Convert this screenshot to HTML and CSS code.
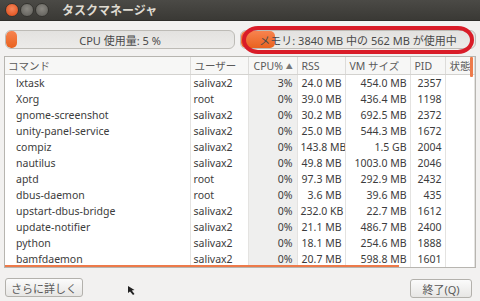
FILE: index.html
```html
<!DOCTYPE html>
<html lang="ja">
<head>
    <meta charset="UTF-8">
    <title>タスクマネージャ</title>
    <link rel="stylesheet" href="styles.css">
</head>
<body>
    <div class="window">
        <div class="titlebar">
            <span class="wbtn close"></span>
            <span class="wbtn min"></span>
            <span class="wbtn max"></span>
            <span class="title">タスクマネージャ</span>
        </div>

        <div class="meters">
            <div class="meter cpu">
                <div class="fill" style="width: 5%"></div>
                <span class="label">CPU 使用量: 5 %</span>
            </div>
            <div class="meter mem">
                <div class="fill" style="width: 14.6%"></div>
                <span class="label">メモリ: 3840 MB 中の 562 MB が使用中</span>
            </div>
            <div class="mark"></div>
        </div>

        <div class="list">
            <table>
                <colgroup>
                    <col class="c-cmd">
                    <col class="c-user">
                    <col class="c-cpu">
                    <col class="c-rss">
                    <col class="c-vm">
                    <col class="c-pid">
                    <col>
                </colgroup>
                <thead>
                    <tr>
                        <th class="cmd">コマンド</th>
                        <th>ユーザー</th>
                        <th class="sorted">CPU% <span class="arrow">▲</span></th>
                        <th>RSS</th>
                        <th>VM サイズ</th>
                        <th>PID</th>
                        <th>状態</th>
                    </tr>
                </thead>
                <tbody>
                    <tr><td class="cmd">lxtask</td><td>salivax2</td><td class="num cpu">3%</td><td class="num">24.0 MB</td><td class="num">454.0 MB</td><td class="num">2357</td><td></td></tr>
                    <tr><td class="cmd">Xorg</td><td>root</td><td class="num cpu">0%</td><td class="num">39.0 MB</td><td class="num">436.4 MB</td><td class="num">1198</td><td></td></tr>
                    <tr><td class="cmd">gnome-screenshot</td><td>salivax2</td><td class="num cpu">0%</td><td class="num">30.2 MB</td><td class="num">692.5 MB</td><td class="num">2372</td><td></td></tr>
                    <tr><td class="cmd">unity-panel-service</td><td>salivax2</td><td class="num cpu">0%</td><td class="num">25.0 MB</td><td class="num">544.3 MB</td><td class="num">1672</td><td></td></tr>
                    <tr><td class="cmd">compiz</td><td>salivax2</td><td class="num cpu">0%</td><td class="num">143.8 MB</td><td class="num">1.5 GB</td><td class="num">2004</td><td></td></tr>
                    <tr><td class="cmd">nautilus</td><td>salivax2</td><td class="num cpu">0%</td><td class="num">49.8 MB</td><td class="num">1003.0 MB</td><td class="num">2046</td><td></td></tr>
                    <tr><td class="cmd">aptd</td><td>root</td><td class="num cpu">0%</td><td class="num">97.3 MB</td><td class="num">292.9 MB</td><td class="num">2432</td><td></td></tr>
                    <tr><td class="cmd">dbus-daemon</td><td>root</td><td class="num cpu">0%</td><td class="num">3.6 MB</td><td class="num">39.6 MB</td><td class="num">435</td><td></td></tr>
                    <tr><td class="cmd">upstart-dbus-bridge</td><td>salivax2</td><td class="num cpu">0%</td><td class="num">232.0 KB</td><td class="num">22.7 MB</td><td class="num">1612</td><td></td></tr>
                    <tr><td class="cmd">update-notifier</td><td>salivax2</td><td class="num cpu">0%</td><td class="num">21.1 MB</td><td class="num">486.7 MB</td><td class="num">2400</td><td></td></tr>
                    <tr><td class="cmd">python</td><td>salivax2</td><td class="num cpu">0%</td><td class="num">18.1 MB</td><td class="num">254.6 MB</td><td class="num">1888</td><td></td></tr>
                    <tr><td class="cmd">bamfdaemon</td><td>salivax2</td><td class="num cpu">0%</td><td class="num">20.7 MB</td><td class="num">598.8 MB</td><td class="num">1601</td><td></td></tr>
                </tbody>
            </table>
            <div class="vscroll"></div>
            <div class="hscroll"></div>
        </div>

        <div class="footer">
            <button>さらに詳しく</button>
            <svg class="pointer" width="10" height="12" viewBox="0 0 10 12">
                <path d="M1 1 L1 8 L3 6.5 L6 10 L7.5 9 L4.8 5.6 L7.5 5 Z" fill="#222"/>
            </svg>
            <button class="quit">終了(Q)</button>
        </div>
    </div>
</body>
</html>
```

FILE: styles.css
```css
body {
    margin: 0;
    font-family: "Noto Sans", "Noto Sans CJK JP", sans-serif;
    font-size: 10.5px;
    color: #3c3c3c;
}
.window {
    width: 480px;
    height: 301px;
    background-color: #f2f1f0;
    overflow: hidden;
}
.titlebar {
    height: 20px;
    display: flex;
    align-items: center;
    padding-left: 5px;
    background: linear-gradient(#4b4a46, #3a3935);
    border-bottom: 1px solid #2e2d2a;
}
.wbtn {
    width: 12px;
    height: 12px;
    border-radius: 50%;
    margin-right: 1px;
    background: radial-gradient(circle at 50% 40%, #8a8882, #5c5b56);
    border: 1px solid #34332f;
}
.wbtn.close { background: radial-gradient(circle at 50% 40%, #f6875b, #dd4814); }
.title {
    margin-left: 12px;
    color: #dfdbd2;
    font-weight: bold;
    font-size: 12px;
}

.meters {
    position: relative;
    display: flex;
    gap: 5px;
    padding: 9px 4px 0 5px;
}
.meter {
    position: relative;
    height: 17px;
    border: 1px solid #bdbbb6;
    border-radius: 6px;
    background: linear-gradient(#e3e2e0, #ecebe9);
    overflow: hidden;
    display: flex;
    align-items: center;
    justify-content: center;
    font-size: 11px;
}
.meter.cpu { width: 228px; }
.meter.mem { flex: 1; }
.meter .fill {
    position: absolute;
    left: 0;
    top: 0;
    bottom: 0;
    background: linear-gradient(#f7834f, #e9621f);
    border-radius: 5px;
}
.meter .label {
    position: relative;
    color: #4a4a4a;
}
.mark {
    position: absolute;
    left: 242px;
    top: 5px;
    width: 224px;
    height: 20px;
    border: 4px solid #d91c28;
    border-radius: 16px / 14px;
}

.list {
    position: relative;
    margin: 7px 4px 0 4px;
    height: 210px;
    border: 1px solid #b7b5b0;
    background-color: white;
    overflow: hidden;
}
table {
    width: 100%;
    border-collapse: collapse;
    table-layout: fixed;
}
.c-cmd { width: 185px; }
.c-user { width: 58px; }
.c-cpu { width: 49px; }
.c-rss { width: 48px; }
.c-vm { width: 65px; }
.c-pid { width: 35px; }
th {
    height: 17px;
    padding: 0 0 0 4px;
    text-align: left;
    font-weight: normal;
    color: #5a5a5a;
    background-color: #f7f7f6;
    border-right: 1px solid #dddcda;
    border-bottom: 1px solid #d3d2cf;
    white-space: nowrap;
    overflow: hidden;
}
th.cmd { padding-left: 3px; }
th.sorted { padding-left: 5px; }
.arrow { font-size: 7px; color: #777; vertical-align: 1px; }
td {
    height: 16px;
    padding: 0 3px;
    border-right: 1px solid #e4e3e1;
    white-space: nowrap;
    overflow: hidden;
}
td.cmd { padding-left: 11px; }
td.num { text-align: right; }
td.cpu { background-color: #efefee; padding-right: 4px; }
.vscroll {
    position: absolute;
    right: 2px;
    top: 0;
    width: 3px;
    height: 20px;
    background-color: #ed7a4a;
    border-radius: 1px;
}
.hscroll {
    position: absolute;
    left: 0;
    top: 208px;
    width: 394px;
    height: 2px;
    background-color: #ed7a4a;
}

.footer {
    position: relative;
    display: flex;
    justify-content: space-between;
    padding: 10px 8px 0 5px;
}
button {
    flex: none;
    height: 19px;
    padding: 0 5px;
    font-family: "Noto Sans", "Noto Sans CJK JP", sans-serif;
    font-size: 11px;
    color: #5a5a5a;
    background: linear-gradient(#fbfbfb, #e7e6e4);
    border: 1px solid #b3b1ac;
    border-radius: 3px;
}
button.quit {
    width: 62px;
    margin-top: 1px;
}
.pointer {
    position: absolute;
    left: 127px;
    top: 17px;
}
```
